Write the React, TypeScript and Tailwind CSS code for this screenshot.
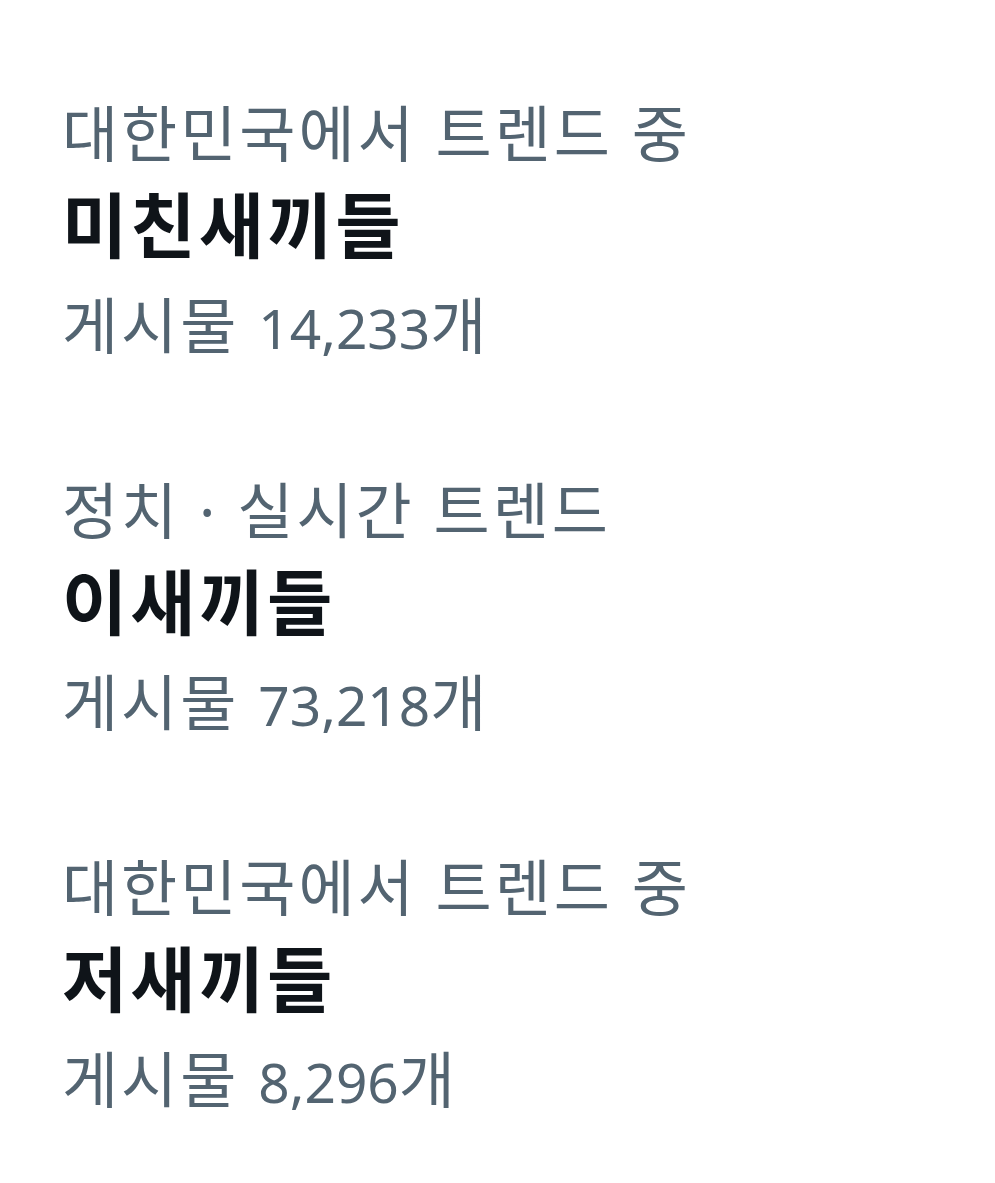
import React from 'react'

interface Trend {
	context: string
	name: string
	count: string
}

const TRENDS: Trend[] = [
	{ context: '대한민국에서 트렌드 중', name: '미친새끼들', count: '14,233' },
	{ context: '정치 · 실시간 트렌드', name: '이새끼들', count: '73,218' },
	{ context: '대한민국에서 트렌드 중', name: '저새끼들', count: '8,296' }
]

const TrendItem: React.FC<{ trend: Trend }> = ({ trend }) => (
	<div className="flex flex-col">
		<span className="text-[61px] leading-[80px] tracking-[3px] text-[#536471] whitespace-nowrap">
			{trend.context}
		</span>
		<span className="text-[71px] leading-[102px] tracking-[3px] font-bold text-[#0f1419] whitespace-nowrap">
			{trend.name}
		</span>
		<span className="text-[61px] leading-[100px] tracking-[3px] text-[#536471] whitespace-nowrap">
			게시물 <span className="text-[55px] tracking-normal">{trend.count}</span>개
		</span>
	</div>
)

export default function App() {
	return (
		<div
			className="min-h-screen w-full bg-white pt-[94px] pl-[62px] flex flex-col gap-[93px]"
			style={{ fontFamily: '"Noto Sans", "Noto Sans CJK KR", sans-serif' }}
		>
			{TRENDS.map((trend, i) => (
				<TrendItem key={i} trend={trend} />
			))}
		</div>
	)
}
